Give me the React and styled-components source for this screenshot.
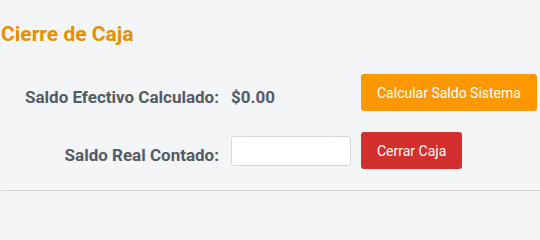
import styled, { createGlobalStyle } from "styled-components";

const GlobalStyle = createGlobalStyle`
  body {
    margin: 0;
    background: #f4f5f7;
    font-family: Roboto, "Liberation Sans", sans-serif;
  }
`;

const Page = styled.div`
  width: 540px;
  height: 223px;
  padding-top: 22px;
  box-sizing: border-box;
  overflow: hidden;
`;

const Title = styled.h2`
  margin: 0;
  padding-left: 1px;
  font-size: 21px;
  line-height: 24px;
  font-weight: 700;
  color: #e68f00;
`;

const Form = styled.div`
  display: grid;
  grid-template-columns: 219px 120px auto;
  column-gap: 12px;
  row-gap: 21px;
  align-items: center;
  margin-top: 28px;
`;

const Label = styled.label`
  justify-self: end;
  padding-top: 9px;
  font-size: 17px;
  font-weight: 700;
  color: #555b65;
`;

const Amount = styled.span`
  padding-top: 9px;
  font-size: 17px;
  font-weight: 700;
  color: #555b65;
`;

const Input = styled.input`
  width: 120px;
  height: 30px;
  box-sizing: border-box;
  border: 1px solid #d4d8de;
  border-radius: 3px;
  background: #fff;
  outline: none;
`;

const Button = styled.button`
  justify-self: start;
  height: 37px;
  padding: 0 16px;
  margin-left: -2px;
  border: none;
  border-radius: 3px;
  background: ${(p) => (p.$variant === "danger" ? "#d32f2f" : "#ff9800")};
  color: #fff;
  font-family: inherit;
  font-size: 14px;
  cursor: pointer;
`;

const Divider = styled.hr`
  margin: 21px 0 0 1px;
  border: none;
  border-top: 1px solid #d1d4d9;
`;

function App() {
  return (
    <Page>
      <GlobalStyle />
      <Title>Cierre de Caja</Title>
      <Form>
        <Label>Saldo Efectivo Calculado:</Label>
        <Amount>$0.00</Amount>
        <Button type="button">Calcular Saldo Sistema</Button>

        <Label htmlFor="saldo-real">Saldo Real Contado:</Label>
        <Input id="saldo-real" type="text" />
        <Button type="button" $variant="danger">
          Cerrar Caja
        </Button>
      </Form>
      <Divider />
    </Page>
  );
}

export default App;
